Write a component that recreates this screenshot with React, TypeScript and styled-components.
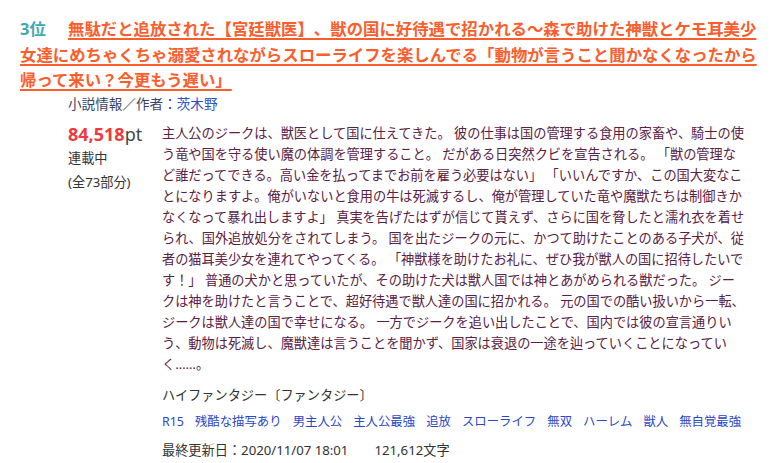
import React from "react";
import styled, { createGlobalStyle } from "styled-components";

const GlobalStyle = createGlobalStyle`
  html, body {
    margin: 0;
    padding: 0;
    background: #fff;
  }
  body {
    font-family: "Noto Sans", "Noto Sans CJK JP", sans-serif;
    color: #333;
  }
`;

const Entry = styled.article`
  width: 745px;
  padding: 16px 0 0 20px;
`;

const Heading = styled.h2`
  margin: 0;
  font-size: 16.4px;
  line-height: 25.5px;
  font-weight: 700;
  text-spacing-trim: space-all;
`;

const Rank = styled.span`
  display: inline-block;
  width: 48px;
  color: #40a8b0;
`;

const TitleLink = styled.a`
  color: #fb5d2c;
  text-decoration: underline;
  text-decoration-thickness: 1.5px;
  text-underline-offset: 3px;
`;

const Detail = styled.div`
  margin-left: 48px;
`;

const Byline = styled.div`
  font-size: 13.6px;
  line-height: 21px;
  color: #3a4466;
`;

const AuthorLink = styled.a`
  color: #2d4fc5;
  text-decoration: none;
`;

const Row = styled.div`
  display: flex;
  margin-top: 8px;
`;

const Stats = styled.div`
  flex: none;
  width: 94px;
  font-size: 13.2px;
  line-height: 24px;
  color: #333;
`;

const Points = styled.div`
  font-size: 18px;
  line-height: 24px;
  color: #444;
`;

const PointValue = styled.span`
  font-weight: 700;
  color: #f0383f;
`;

const Main = styled.div`
  width: 585.5px;
  padding-top: 1.5px;
`;

const Synopsis = styled.p`
  margin: 0;
  font-size: 13.2px;
  line-height: 21px;
  color: #5a2145;
`;

const Genre = styled.div`
  margin-top: 10px;
  font-size: 13.2px;
  line-height: 21px;
  color: #333;
`;

const Tags = styled.ul`
  display: flex;
  flex-wrap: wrap;
  gap: 0 11px;
  list-style: none;
  margin: 5.5px 0 0;
  padding: 0;
  font-size: 12.4px;
  line-height: 20px;
`;

const TagLink = styled.a`
  color: #2b47c9;
  text-decoration: none;
`;

const Footer = styled.div`
  display: flex;
  gap: 26px;
  margin-top: 8px;
  font-size: 13.2px;
  line-height: 20px;
  color: #333;
`;

const novel = {
  rank: 3,
  title:
    "無駄だと追放された【宮廷獣医】、獣の国に好待遇で招かれる～森で助けた神獣とケモ耳美少女達にめちゃくちゃ溺愛されながらスローライフを楽しんでる「動物が言うこと聞かなくなったから帰って来い？今更もう遅い」",
  author: "茨木野",
  points: "84,518",
  status: "連載中",
  parts: "(全73部分)",
  synopsis:
    "主人公のジークは、獣医として国に仕えてきた。 彼の仕事は国の管理する食用の家畜や、騎士の使う竜や国を守る使い魔の体調を管理すること。 だがある日突然クビを宣告される。 「獣の管理など誰だってできる。高い金を払ってまでお前を雇う必要はない」 「いいんですか、この国大変なことになりますよ。俺がいないと食用の牛は死滅するし、俺が管理していた竜や魔獣たちは制御きかなくなって暴れ出しますよ」 真実を告げたはずが信じて貰えず、さらに国を脅したと濡れ衣を着せられ、国外追放処分をされてしまう。 国を出たジークの元に、かつて助けたことのある子犬が、従者の猫耳美少女を連れてやってくる。 「神獣様を助けたお礼に、ぜひ我が獣人の国に招待したいです！」 普通の犬かと思っていたが、その助けた犬は獣人国では神とあがめられる獣だった。 ジークは神を助けたと言うことで、超好待遇で獣人達の国に招かれる。 元の国での酷い扱いから一転、ジークは獣人達の国で幸せになる。 一方でジークを追い出したことで、国内では彼の宣言通りいう、動物は死滅し、魔獣達は言うことを聞かず、国家は衰退の一途を辿っていくことになっていく……。",
  genre: "ハイファンタジー〔ファンタジー〕",
  tags: [
    "R15",
    "残酷な描写あり",
    "男主人公",
    "主人公最強",
    "追放",
    "スローライフ",
    "無双",
    "ハーレム",
    "獣人",
    "無自覚最強",
  ],
  updated: "最終更新日：2020/11/07 18:01",
  length: "121,612文字",
};

export default function App() {
  return (
    <>
      <GlobalStyle />
      <Entry>
        <Heading>
          <Rank>{novel.rank}位</Rank>
          <TitleLink href="#">{novel.title}</TitleLink>
        </Heading>
        <Detail>
          <Byline>
            小説情報／作者：<AuthorLink href="#">{novel.author}</AuthorLink>
          </Byline>
          <Row>
            <Stats>
              <Points>
                <PointValue>{novel.points}</PointValue>pt
              </Points>
              <div>{novel.status}</div>
              <div>{novel.parts}</div>
            </Stats>
            <Main>
              <Synopsis>{novel.synopsis}</Synopsis>
              <Genre>{novel.genre}</Genre>
              <Tags>
                {novel.tags.map((t) => (
                  <li key={t}>
                    <TagLink href="#">{t}</TagLink>
                  </li>
                ))}
              </Tags>
              <Footer>
                <span>{novel.updated}</span>
                <span>{novel.length}</span>
              </Footer>
            </Main>
          </Row>
        </Detail>
      </Entry>
    </>
  );
}
